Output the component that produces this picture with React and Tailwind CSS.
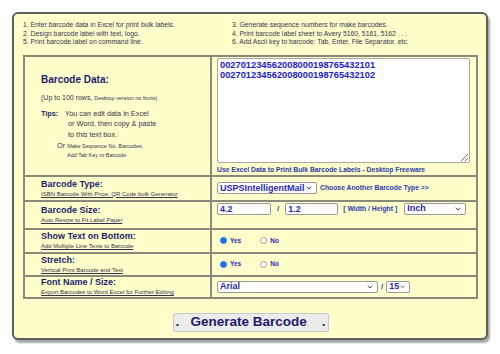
import React from "react";
import { ChevronDown } from "lucide-react";

const Chevron = () => (
  <ChevronDown className="w-[8px] h-[8px] text-[#444]" strokeWidth={3} />
);

const Select = ({ value, className }) => (
  <div
    className={`flex items-center justify-between h-[12px] bg-white border border-[#9a9a9a] rounded-[2px] pl-[2px] pr-[3px] text-[9px] font-bold text-[#2a2ab0] leading-none ${className}`}
  >
    <span>{value}</span>
    <Chevron />
  </div>
);

const Radio = ({ label, checked }) => (
  <div className="flex items-center gap-[3px]">
    <span
      className={`w-[7px] h-[7px] rounded-full border ${
        checked ? "bg-[#1e73e8] border-[#1e73e8]" : "bg-white border-[#999]"
      }`}
    />
    <span className="text-[6.5px] font-bold text-[#2a2ab0]">{label}</span>
  </div>
);

const Row = ({ title, sub, height, children, rightClass = "items-center" }) => (
  <div className={`flex border-t-2 border-[#8a8a78] ${height}`}>
    <div className="w-[187px] shrink-0 border-r-2 border-[#8a8a78] pl-[16px] flex flex-col justify-center">
      <p className="text-[9px] font-bold text-[#1c1c6b] leading-[11px]">{title}</p>
      <p className="text-[6px] text-[#33334d] underline leading-[8px]">{sub}</p>
    </div>
    <div className={`flex-1 flex pl-[5px] ${rightClass}`}>{children}</div>
  </div>
);

export default function App() {
  return (
    <div className="w-[500px] h-[354px] bg-white pt-[12px] pl-[12px] font-['Liberation_Sans',Arial,sans-serif]">
      <div className="w-[476px] h-[328px] bg-[#ffffcc] border-2 border-[#5e5e5e] rounded-[6px] shadow-[2px_3px_2px_rgba(0,0,0,0.35)] pl-[9px] pt-[7px]">
        {/* Steps */}
        <div className="flex text-[6.8px] leading-[8.5px] text-[#33334d]">
          <div className="w-[209px]">
            <p>1. Enter barcode data in Excel for print bulk labels.</p>
            <p>2. Design barcode label with text, logo.</p>
            <p>5. Print barcode label on command line.</p>
          </div>
          <div>
            <p>3. Generate sequence numbers for make barcodes.</p>
            <p>4. Print barcode label sheet to Avery 5160, 5161, 5162 . . .</p>
            <p>6. Add Ascii key to barcode: Tab, Enter, File Separator. etc.</p>
          </div>
        </div>

        {/* Form table */}
        <div className="mt-[8px] w-[455px] border-2 border-[#8a8a78]">
          <div className="flex h-[118px]">
            <div className="w-[187px] shrink-0 border-r-2 border-[#8a8a78] pl-[16px] pt-[17px]">
              <p className="text-[10px] font-bold text-[#1c1c6b] leading-[12px]">Barcode Data:</p>
              <p className="mt-[7px] text-[7px] leading-[9px] text-[#33334d]">
                (Up to 100 rows, <span className="text-[5.5px]">Desktop version no limits)</span>
              </p>
              <div className="mt-[6px] flex text-[7.3px] leading-[10.5px] text-[#33334d]">
                <span className="w-[24px] font-bold text-[#1c1c6b]">Tips:</span>
                <div>
                  <p>You can edit data in Excel</p>
                  <p className="pl-[3px]">or Word, then copy &amp; paste</p>
                  <p className="pl-[3px]">to this text box.</p>
                </div>
              </div>
              <p className="pl-[16px] text-[7.3px] leading-[10px] text-[#33334d] mt-[1px]">
                Or <span className="text-[5.5px]">Make Sequence No. Barcodes.</span>
              </p>
              <p className="pl-[26px] text-[5.5px] leading-[8px] text-[#33334d]">
                Add Tab Key to Barcode
              </p>
            </div>
            <div className="flex-1 pl-[5px] pt-[1px]">
              <textarea
                className="block w-[253px] h-[105px] bg-white border border-[#a8a8a8] rounded-[2px] px-[2px] pt-[1px] text-[9.3px] leading-[10px] font-bold text-[#2222cc] resize-y outline-none"
                defaultValue={"002701234562008000198765432101\n002701234562008000198765432102"}
              />
              <p className="mt-[2px] text-[6.8px] leading-[9px] font-bold text-[#2a3aa8]">
                Use Excel Data to Print Bulk Barcode Labels - Desktop Freeware
              </p>
            </div>
          </div>

          <Row title="Barcode Type:" sub="ISBN Barcode With Price, QR Code bulk Generator" height="h-[25px]">
            <Select value="USPSIntelligentMail" className="w-[100px]" />
            <span className="ml-[3px] text-[6.8px] font-bold text-[#2a3aa8]">
              Choose Another Barcode Type &gt;&gt;
            </span>
          </Row>

          <Row title="Barcode Size:" sub="Auto Resize to Fit Label Paper" height="h-[28px]" rightClass="items-start pt-[1px]">
            <div className="w-[54px] h-[12px] bg-white border border-[#9a9a9a] rounded-[2px] pl-[2px] text-[9px] font-bold text-[#2a2ab0] leading-[10px]">
              4.2
            </div>
            <span className="mx-[6px] text-[8px] font-bold text-[#2a3aa8] leading-[12px]">/</span>
            <div className="w-[53px] h-[12px] bg-white border border-[#9a9a9a] rounded-[2px] pl-[2px] text-[9px] font-bold text-[#2a2ab0] leading-[10px]">
              1.2
            </div>
            <span className="ml-[5px] text-[6.8px] font-bold text-[#2a3aa8] leading-[12px]">
              [ Width / Height ]
            </span>
            <Select value="Inch" className="w-[62px] ml-[7px]" />
          </Row>

          <Row title="Show Text on Bottom:" sub="Add Multiple Line Texts to Barcode" height="h-[24px]">
            <div className="flex gap-[19px] pl-[3px]">
              <Radio label="Yes" checked />
              <Radio label="No" />
            </div>
          </Row>

          <Row title="Stretch:" sub="Vertical Print Barcode and Text" height="h-[23px]">
            <div className="flex gap-[19px] pl-[3px]">
              <Radio label="Yes" checked />
              <Radio label="No" />
            </div>
          </Row>

          <Row title="Font Name / Size:" sub="Export Barcodes to Word Excel for Further Editing" height="h-[22px]">
            <Select value="Arial" className="w-[161px]" />
            <span className="mx-[3px] text-[8px] font-bold text-[#2a3aa8]">/</span>
            <Select value="15" className="w-[24px]" />
          </Row>
        </div>

        {/* Submit */}
        <div className="w-[455px] flex justify-center mt-[14px]">
          <button className="w-[156px] h-[19px] bg-[#ececec] border border-[#c8c8c8] rounded-[2px] text-[13.5px] font-bold text-[#1c1c6b] leading-none">
            .&nbsp;&nbsp;&nbsp;Generate Barcode&nbsp;&nbsp;&nbsp;&nbsp;.
          </button>
        </div>
      </div>
    </div>
  );
}
